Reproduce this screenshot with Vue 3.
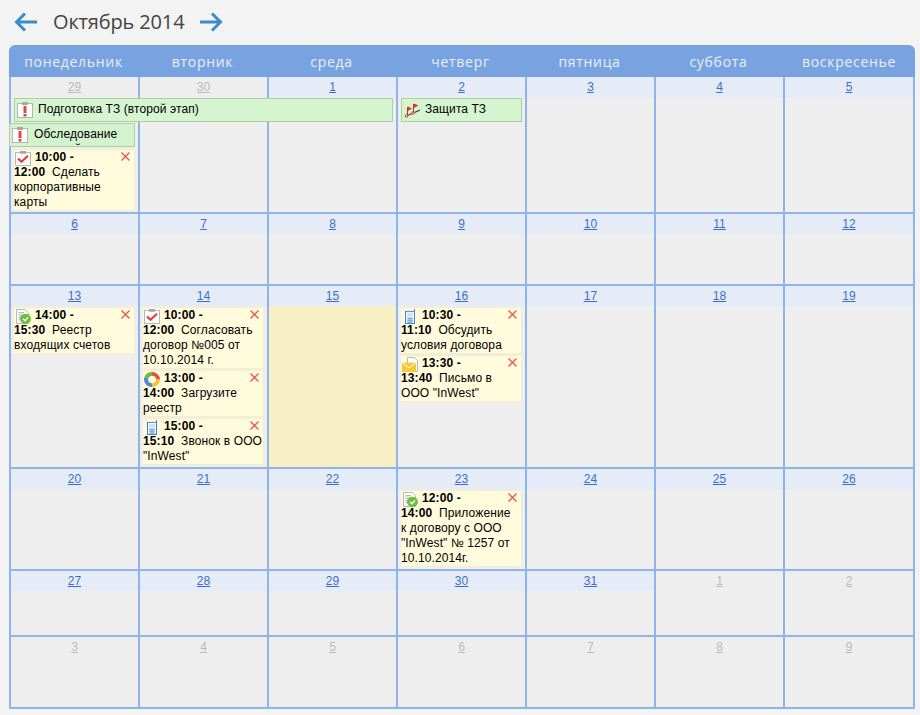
<script setup>
const headers = ['понедельник', 'вторник', 'среда', 'четверг', 'пятница', 'суббота', 'воскресенье']

const ev = (icon, from, to, text) => ({ icon, from, to, text })
const bar = (icon, text, kind) => ({ icon, text, kind })

const d = (n, extra = {}) => ({ n, ...extra })

const weeks = [
  [
    d(29, { out: true, bars: [bar('alert', 'Подготовка ТЗ (второй этап)', 'wide'), bar('alert', 'Обследование текущей ситуации', 'shift')], events: [ev('task', '10:00', '12:00', 'Сделать корпоративные карты')] }),
    d(30, { out: true }), d(1), d(2, { bars: [bar('flags', 'Защита ТЗ', 'one')] }), d(3), d(4), d(5)
  ],
  [d(6), d(7), d(8), d(9), d(10), d(11), d(12)],
  [
    d(13, { events: [ev('doc', '14:00', '15:30', 'Реестр входящих счетов')] }),
    d(14, { events: [
      ev('task', '10:00', '12:00', 'Согласовать договор №005 от 10.10.2014 г.'),
      ev('ring', '13:00', '14:00', 'Загрузите реестр'),
      ev('phone', '15:00', '15:10', 'Звонок в ООО "InWest"')
    ] }),
    d(15, { today: true }),
    d(16, { events: [
      ev('phone', '10:30', '11:10', 'Обсудить условия договора'),
      ev('mail', '13:30', '13:40', 'Письмо в ООО "InWest"')
    ] }),
    d(17), d(18), d(19)
  ],
  [
    d(20), d(21), d(22),
    d(23, { events: [ev('doc', '12:00', '14:00', 'Приложение к\u00a0договору с ООО "InWest" № 1257 от 10.10.2014г.')] }),
    d(24), d(25), d(26)
  ],
  [d(27), d(28), d(29), d(30), d(31), d(1, { out: true }), d(2, { out: true })],
  [3, 4, 5, 6, 7, 8, 9].map((n) => d(n, { out: true }))
]

const days = weeks.flat()
</script>

<template>
  <div class="page">
    <div class="nav">
      <svg class="arrow" width="24" height="22" viewBox="0 0 24 22">
        <path d="M23 11H3M11 2.500L2.500 11L11 19.500" />
      </svg>
      <span class="title">Октябрь 2014</span>
      <svg class="arrow" width="24" height="22" viewBox="0 0 24 22">
        <path d="M1 11H21M13 2.500L21.500 11L13 19.500" />
      </svg>
    </div>

    <div class="calendar">
      <div class="head">
        <div v-for="h in headers" :key="h" class="head-cell">{{ h }}</div>
      </div>
      <div class="month">
        <div v-for="(day, i) in days" :key="i" class="cell" :class="{ today: day.today }">
          <div class="date" :class="{ out: day.out }"><a>{{ day.n }}</a></div>
          <div
            v-for="b in day.bars"
            :key="b.text"
            class="bar"
            :class="b.kind"
          >
            <svg v-if="b.icon === 'alert'" class="ico" width="16" height="16" viewBox="0 0 16 16">
              <rect x="0.500" y="1.500" width="15" height="14" fill="#fff" stroke="#b5b5b5" />
              <rect x="5" y="0" width="6" height="3" fill="#a8a8a8" />
              <rect x="6.500" y="4" width="3" height="7" fill="#e04840" />
              <rect x="6.500" y="12" width="3" height="2.500" fill="#e04840" />
            </svg>
            <svg v-else class="ico" width="16" height="16" viewBox="0 0 16 16">
              <path d="M1 14.500L16 8" stroke="#444" stroke-width="1.200" fill="none" />
              <path d="M3.500 13V5M9.500 10.500V2" stroke="#c03028" stroke-width="1" fill="none" />
              <path d="M4 4.500L8 6.500L4 9Z" fill="#e8382c" />
              <path d="M10 1.500L14.500 3.500L10 6Z" fill="#e8382c" />
              <circle cx="2.500" cy="14" r="1.300" fill="#fff" stroke="#d03028" />
              <circle cx="9" cy="11" r="1.300" fill="#fff" stroke="#d03028" />
            </svg>
            <span class="bar-text">{{ b.text }}</span>
          </div>
          <div v-for="e in day.events" :key="e.from" class="event">
            <svg class="close" width="9" height="9" viewBox="0 0 9 9">
              <path d="M0.500 0.500L8.500 8.500M8.500 0.500L0.500 8.500" />
            </svg>
            <svg class="ico-inline" width="16" height="15" viewBox="0 0 16 16" preserveAspectRatio="none">
              <template v-if="e.icon === 'task'">
                <rect x="0.500" y="1.500" width="15" height="14" fill="#fff" stroke="#b5b5b5" />
                <rect x="5" y="0" width="6" height="3" fill="#a8a8a8" />
                <path d="M3 8L6.500 11.500L13 5" fill="none" stroke="#e0403a" stroke-width="2.200" />
              </template>
              <template v-else-if="e.icon === 'doc'">
                <path d="M1.500 0.500H10L13.500 4V15.500H1.500Z" fill="#fff" stroke="#b5b5b5" />
                <path d="M3.500 4H9M3.500 6.500H11M3.500 9H7M3.500 11.500H6" stroke="#a0a0a0" fill="none" />
                <circle cx="10.500" cy="10.500" r="5.500" fill="#6cbf3c" />
                <path d="M8 10.500L10 12.500L13 9" fill="none" stroke="#fff" stroke-width="1.400" />
              </template>
              <template v-else-if="e.icon === 'ring'">
                <g fill="none" stroke-width="4">
                  <path d="M2.400 6A6 6 0 0 1 8 2" stroke="#6cb83c" />
                  <path d="M8 2A6 6 0 0 1 14 8" stroke="#e0503c" />
                  <path d="M14 8A6 6 0 0 1 8 14" stroke="#f4c430" />
                  <path d="M8 14A6 6 0 0 1 2.400 6" stroke="#4a8cd0" />
                </g>
              </template>
              <template v-else-if="e.icon === 'phone'">
                <rect x="3.500" y="2.500" width="9" height="13" fill="#f4f8fd" stroke="#3f82c8" />
                <path d="M12.500 0V3" stroke="#3f82c8" fill="none" />
                <rect x="5" y="4" width="6" height="4" fill="#cfe2f6" />
                <path d="M5 10H11M5 12H11M5 14H11M7 9V15M9 9V15" stroke="#5a96d4" stroke-width="0.800" fill="none" />
              </template>
              <template v-else>
                <path d="M5.500 0.500H12L15.500 4V15.500H5.500Z" fill="#fff" stroke="#b5b5b5" />
                <rect x="0" y="6" width="14" height="10" fill="#f8c838" />
                <path d="M0 6L7 11.500L14 6" fill="none" stroke="#fff" stroke-width="1" />
              </template>
            </svg>
            <b>{{ e.from }} -<br />{{ e.to }}</b>&nbsp; {{ e.text }}
          </div>
        </div>
      </div>
    </div>
  </div>
</template>

<style>
html, body {
  margin: 0;
  background: #f3f3f3;
}
</style>

<style scoped>
.page {
  width: 920px;
  height: 715px;
  padding: 10px 5px 0 9px;
  box-sizing: border-box;
  overflow: hidden;
  font-family: "Liberation Sans", Arial, sans-serif;
}
.nav {
  display: flex;
  align-items: center;
  height: 23px;
  margin-bottom: 12px;
  padding-left: 5px;
}
.title {
  font-family: "Open Sans", sans-serif;
  font-size: 20px;
  letter-spacing: -0.15px;
  color: #444;
  margin: 0 15px 0 15px;
}
.arrow {
  fill: none;
  stroke: #3d8bcb;
  stroke-width: 3;
}
.calendar {
  width: 906px;
}
.head {
  display: grid;
  grid-template-columns: repeat(6, 129px) 132px;
  height: 32px;
  background: #78a3e0;
  border-radius: 6px 6px 0 0;
}
.head-cell {
  font-family: "Open Sans", sans-serif;
  font-size: 14px;
  letter-spacing: 0.7px;
  line-height: 34px;
  text-align: center;
  color: #e8f0fb;
}
.month {
  display: grid;
  grid-template-columns: repeat(6, 129px) 130px;
  grid-template-rows: 137px 72px 183px 102px 66px 72px;
  border-left: 2px solid #8fb4e8;
}
.cell {
  background: #eee;
  border-right: 2px solid #8fb4e8;
  border-bottom: 2px solid #8fb4e8;
  box-sizing: border-box;
  font-size: 12px;
  line-height: 15px;
  color: #111;
  min-width: 0;
}
.cell.today {
  background: #f9efc4;
}
.date {
  height: 20px;
  line-height: 20px;
  margin-bottom: 1px;
  text-align: center;
  background: #e5ecf8;
}
.date a {
  color: #3a6fc9;
  text-decoration: underline;
}
.date.out {
  background: #eee;
}
.date.out a {
  color: #bbb;
}
.bar {
  position: relative;
  z-index: 1;
  display: flex;
  gap: 5px;
  box-sizing: border-box;
  height: 24px;
  margin: 0 3px 1px;
  padding: 3px 2px;
  background: #d5f5d0;
  border: 1px solid #acd0a0;
  overflow: hidden;
  color: #000;
  letter-spacing: 0.1px;
}
.bar.wide {
  width: 379px;
}
.bar.shift {
  width: 126px;
  gap: 6px;
  margin-left: -2px;
  margin-bottom: 2px;
  background: #d3f2ce;
}
.ico {
  flex: none;
}
.bar-text {
  min-width: 0;
}
.event {
  box-sizing: border-box;
  margin: 0 3px 1px;
  border: 1px solid #f6eecb;
  border-left: 0;
  background: #fffbdc;
  color: #000;
  letter-spacing: 0.1px;
}
.ico-inline {
  vertical-align: top;
  margin: 1px 4px -1px 1px;
}
.close {
  float: right;
  margin: 2px 4px 0 4px;
  fill: none;
  stroke: #e8564a;
  stroke-width: 1.300;
}
</style>
